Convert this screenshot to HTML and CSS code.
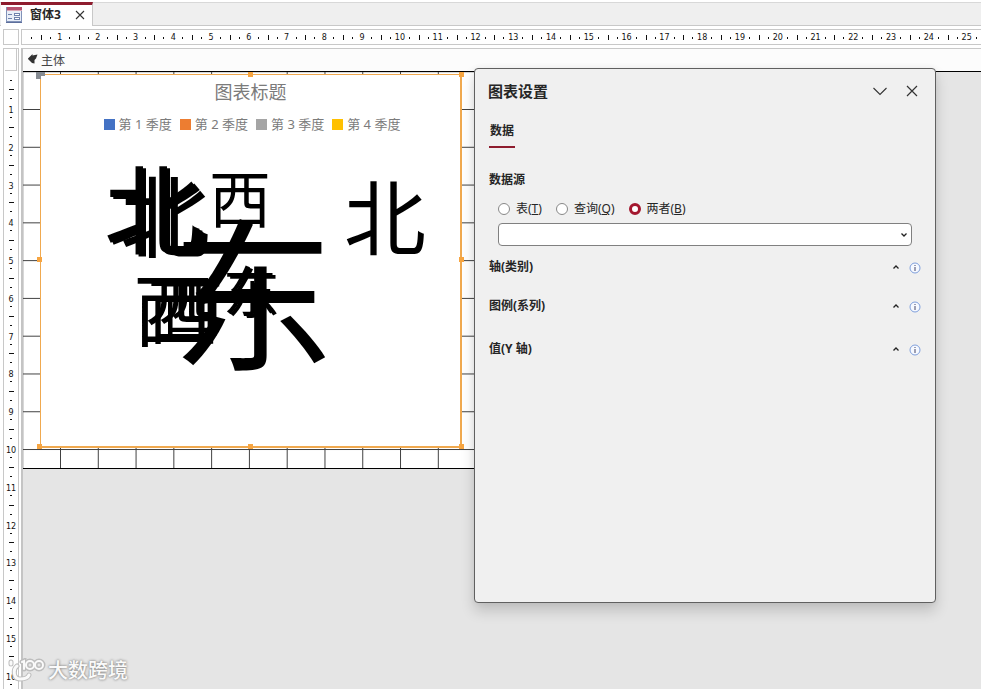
FILE: index.html
```
<!DOCTYPE html>
<html lang="zh-CN">
<head>
<meta charset="utf-8">
<title>窗体3</title>
<link rel="stylesheet" href="styles.css">
</head>
<body>
<div class="tabbar">
  <div class="tab">
    <svg class="tab-icon" width="16" height="16" viewBox="0 0 16 16" aria-hidden="true">
      <rect x="0.5" y="0.5" width="15" height="14" fill="#e8eef8" stroke="#8192b8"/>
      <rect x="1" y="0" width="15" height="4" fill="#b75370"/>
      <rect x="1" y="3" width="15" height="1" fill="#d9a5b4"/>
      <path d="M2 7.5h4M2 11.5h4" stroke="#6f82ad"/>
      <rect x="8.5" y="6.5" width="5" height="2" fill="#fff" stroke="#6f82ad"/>
      <rect x="8.5" y="10.5" width="5" height="2" fill="#fff" stroke="#6f82ad"/>
      <path d="M0 15.5h16" stroke="#5d6f9c"/>
    </svg>
    <span class="tab-name">窗体3</span>
    <button class="icon-btn" type="button" aria-label="关闭窗体">
      <svg width="10" height="10" viewBox="0 0 10 10"><path d="M1 1l8 8M9 1l-8 8" stroke="#333" stroke-width="1.1"/></svg>
    </button>
  </div>
</div>
<div class="ruler-row">
  <div class="corner"></div>
  <div class="ruler-h">
    <i></i><span>1</span><span>2</span><span>3</span><span>4</span><span>5</span><span>6</span><span>7</span><span>8</span><span>9</span><span>10</span><span>11</span><span>12</span><span>13</span><span>14</span><span>15</span><span>16</span><span>17</span><span>18</span><span>19</span><span>20</span><span>21</span><span>22</span><span>23</span><span>24</span><span>25</span>
  </div>
</div>
<main class="design">
  <div class="ruler-v">
    <div class="selector"></div>
    <i></i><span>1</span><span>2</span><span>3</span><span>4</span><span>5</span><span>6</span><span>7</span><span>8</span><span>9</span><span>10</span><span>11</span><span>12</span><span>13</span><span>14</span><span>15</span><span>16</span>
  </div>
  <div class="canvas">
    <div class="section-head">
      <svg width="10" height="10" viewBox="0 0 10 10" aria-hidden="true"><path d="M0 4.500L4.500 0V1.500L9.500 0.500L8 4.500L6.500 6V9.500L4 9L0 5z" fill="#333"/></svg>
      <span>主体</span>
    </div>
    <div class="section-body">
      <div class="chart">
        <b class="mover"></b>
        <b class="grip tm"></b><b class="grip tr"></b><b class="grip ml"></b><b class="grip mr"></b><b class="grip bl"></b><b class="grip bm"></b><b class="grip br"></b>
        <h2>图表标题</h2>
        <ul class="legend">
          <li class="q1">第 1 季度</li><li class="q2">第 2 季度</li><li class="q3">第 3 季度</li><li class="q4">第 4 季度</li>
        </ul>
        <svg class="plot" width="350" height="230" viewBox="90 150 350 230">
          <text class="g98" x="104" y="247">北</text>
          <text class="g98" x="107" y="249">北</text>
          <text class="g90" x="120" y="251">北</text>
          <text class="g82" x="344" y="249">北</text>
          <text class="g62" x="209" y="223">西</text>
          <text class="g80" x="133" y="340">西</text>
          <text class="g74" x="147" y="338">西</text>
          <text class="g62" x="161" y="331">西</text>
          <text class="g54" x="226" y="314">东</text>
          <text class="g54" x="223" y="312">东</text>
          <text class="g164" x="171" y="358">东</text>
        </svg>
      </div>
    </div>
  </div>
</main>
<section class="panel" aria-label="图表设置">
  <header>
    <h1>图表设置</h1>
    <button class="icon-btn" type="button" aria-label="折叠"><svg width="14" height="14" viewBox="0 0 14 14"><path d="M0.5 4L7 10.5L13.5 4" fill="none" stroke="#333" stroke-width="1.1"/></svg></button>
    <button class="icon-btn" type="button" aria-label="关闭"><svg width="12" height="12" viewBox="0 0 12 12"><path d="M1 1l10 10M11 1l-10 10" stroke="#333" stroke-width="1.2"/></svg></button>
  </header>
  <button class="data-tab" type="button">数据</button>
  <h3 id="source-label">数据源</h3>
  <div class="radios" role="radiogroup" aria-labelledby="source-label">
    <label><input type="radio" name="src">表(<u>T</u>)</label>
    <label><input type="radio" name="src">查询(<u>Q</u>)</label>
    <label><input type="radio" name="src" checked>两者(<u>B</u>)</label>
  </div>
  <div class="combo">
    <select aria-labelledby="source-label"><option></option></select>
    <svg width="6" height="4" viewBox="0 0 6 4" aria-hidden="true"><path d="M0.5 0.5L3 3L5.5 0.5" fill="none" stroke="#222" stroke-width="1.3"/></svg>
  </div>
  <div class="groups">
    <div class="group"><h3>轴(类别)</h3>
      <button class="icon-btn" type="button" aria-label="折叠轴"><svg width="6" height="4" viewBox="0 0 6 4"><path d="M0.5 3.5L3 1L5.5 3.5" fill="none" stroke="#222" stroke-width="1.3"/></svg></button>
      <button class="icon-btn" type="button" aria-label="轴信息"><svg width="12" height="12" viewBox="0 0 12 12"><circle cx="6" cy="6" r="5" fill="#f6f9ff" stroke="#7f9fdc"/><path d="M6 3v1M6 5v4" stroke="#446"/></svg></button>
    </div>
    <div class="group"><h3>图例(系列)</h3>
      <button class="icon-btn" type="button" aria-label="折叠图例"><svg width="6" height="4" viewBox="0 0 6 4"><path d="M0.5 3.5L3 1L5.5 3.5" fill="none" stroke="#222" stroke-width="1.3"/></svg></button>
      <button class="icon-btn" type="button" aria-label="图例信息"><svg width="12" height="12" viewBox="0 0 12 12"><circle cx="6" cy="6" r="5" fill="#f6f9ff" stroke="#7f9fdc"/><path d="M6 3v1M6 5v4" stroke="#446"/></svg></button>
    </div>
    <div class="group last"><h3>值(Y 轴)</h3>
      <button class="icon-btn" type="button" aria-label="折叠值"><svg width="6" height="4" viewBox="0 0 6 4"><path d="M0.5 3.5L3 1L5.5 3.5" fill="none" stroke="#222" stroke-width="1.3"/></svg></button>
      <button class="icon-btn" type="button" aria-label="值信息"><svg width="12" height="12" viewBox="0 0 12 12"><circle cx="6" cy="6" r="5" fill="#f6f9ff" stroke="#7f9fdc"/><path d="M6 3v1M6 5v4" stroke="#446"/></svg></button>
    </div>
  </div>
</section>
<div class="watermark">
  <svg width="38" height="26" viewBox="0 0 38 26" aria-hidden="true">
    <g fill="none" stroke-linecap="round">
      <g stroke="#bdbdbd" stroke-width="5"><path d="M3 4v2M9 8C5 11 5 21 12 21c5 0 8-1 9-4"/><path d="M14 4l2-1v8"/><ellipse cx="22" cy="7" rx="4" ry="4"/><ellipse cx="31" cy="7" rx="4" ry="4"/></g>
      <g stroke="#fafafa" stroke-width="2"><path stroke-width="3" d="M3 4v2M9 8C5 11 5 21 12 21c5 0 8-1 9-4"/><path d="M14 4l2-1v8"/><ellipse cx="22" cy="7" rx="4" ry="4"/><ellipse cx="31" cy="7" rx="4" ry="4"/></g>
    </g>
  </svg>
  <span>大数跨境</span>
</div>
</body>
</html>
```
FILE: styles.css
```
* { box-sizing: border-box; }
body {
  margin: 0;
  height: 100vh;
  display: flex;
  flex-direction: column;
  overflow: hidden;
  position: relative;
  background: #fff;
  color: #262626;
  font: 12px/16px "Noto Sans", "Noto Sans CJK SC", sans-serif;
}
h1, h2, h3, ul { margin: 0; padding: 0; }
svg { display: block; flex: none; }
button { font: inherit; color: inherit; }
.icon-btn {
  display: grid;
  place-items: center;
  padding: 0;
  border: 0;
  background: none;
}

/* document tabs */
.tabbar {
  flex: none;
  display: flex;
  height: 24px;
  margin-top: 2px;
  background: #efefef;
  box-shadow: inset 0 -1px #c8c8c8, inset 0 1px #d8d8d8;
}
.tab {
  display: flex;
  align-items: center;
  gap: 8px;
  padding: 0 7px 2px 5px;
  margin-left: 1px;
  background: #fff;
  border-top: 3px solid #8e1c2e;
  border-right: 1px solid #c8c8c8;
}
.tab-name { font-weight: 700; margin-right: 6px; }

/* rulers: one cell per centimetre */
.ruler-row {
  flex: none;
  display: flex;
  gap: 2px;
  margin: 3px 0 3px 3px;
  height: 16px;
}
.corner { width: 16px; border: 1px solid #c8c8c8; }
.ruler-h {
  flex: 1;
  min-width: 0;
  display: flex;
  overflow: hidden;
  border: solid #c8c8c8;
  border-width: 1px 0 1px 1px;
}
.ruler-h, .ruler-v { font: 8px/16px "DejaVu Sans", sans-serif; color: #111; }
.ruler-h span, .ruler-h i { flex: none; height: 14px; background-repeat: no-repeat; }
.ruler-h span {
  width: 1cm;
  text-align: center;
  background-image: linear-gradient(#111, #111), linear-gradient(#111, #111), linear-gradient(#111, #111);
  background-size: 1px 5px, 1px 2px, 1px 2px;
  background-position: 0 5px, 9px 7px, 28px 7px;
}
.ruler-h i {
  width: 19px;
  background-image: linear-gradient(#111, #111);
  background-size: 1px 2px;
  background-position: 9px 7px;
}
.design { flex: 1; min-height: 0; display: flex; gap: 2px; padding-left: 3px; }
.ruler-v {
  width: 16px;
  display: flex;
  flex-direction: column;
  overflow: hidden;
  border: solid #c8c8c8;
  border-width: 1px 1px 0;
}
.selector { flex: none; height: 22px; margin: 0 1px; border: solid #c8c8c8; border-width: 0 1px 1px 0; }
.ruler-v span, .ruler-v i { flex: none; background-repeat: no-repeat; }
.ruler-v span {
  height: 1cm;
  padding-top: 3px;
  line-height: 1cm;
  text-align: center;
  background-image: linear-gradient(#111, #111), linear-gradient(#111, #111), linear-gradient(#111, #111);
  background-size: 5px 1px, 2px 1px, 2px 1px;
  background-position: 5px 0, 6px 9px, 6px 28px;
}
.ruler-v i {
  height: 18px;
  background-image: linear-gradient(#111, #111);
  background-size: 2px 1px;
  background-position: 6px 9px;
}

/* form canvas */
.canvas {
  flex: 1;
  min-width: 0;
  position: relative;
  background: #e5e5e5;
  border-left: 2px solid #c4c4c4;
}
.section-head {
  display: flex;
  align-items: center;
  gap: 3px;
  height: 23px;
  padding: 2px 0 0 5px;
  border-top: 1px solid #c8c8c8;
  background: #fcfcfc;
  color: #444;
}
.section-head svg { margin-bottom: 4px; }
.section-head::after {
  content: "";
  position: absolute;
  top: 23px;
  left: 0;
  right: 0;
  height: 1px;
  background: #000;
}
.section-body {
  position: relative;
  width: 480px;
  height: 398px;
  background:
    linear-gradient(90deg, #404040 1px, transparent 1px) 37px 0 / 1cm 1cm,
    linear-gradient(#404040 1px, transparent 1px) 0 37px / 1cm 1cm,
    #fff;
  border: solid #000;
  border-width: 1px 0;
}
.chart {
  position: absolute;
  left: 17px;
  top: 2px;
  width: 422px;
  height: 374px;
  padding-top: 7px;
  background: #fff;
  border: solid #f0a94f;
  border-width: 1px 2px 2px 1px;
  color: #7b7b7b;
  text-align: center;
}
.grip { position: absolute; width: 5px; height: 5px; background: #f7a541; }
.mover {
  position: absolute;
  left: -5px;
  top: -3px;
  width: 9px;
  height: 7px;
  border: solid #868b92;
  border-width: 4px 0 0 5px;
}
.tm { left: 207px; top: -3px; }
.tr { right: -4px; top: -3px; }
.ml { left: -4px; top: 182px; }
.mr { right: -4px; top: 182px; }
.bl { left: -4px; bottom: -3px; }
.bm { left: 207px; bottom: -3px; }
.br { right: -4px; bottom: -3px; }
.chart h2 { font-size: 18px; line-height: 20px; font-weight: 400; }
.legend {
  display: flex;
  justify-content: center;
  gap: 8px;
  margin-top: 12px;
  padding-left: 3px;
  list-style: none;
  font-size: 13px;
  line-height: 20px;
}
.legend li { display: flex; align-items: center; gap: 4px; white-space: pre; }
.legend li::before { content: ""; width: 11px; height: 11px; background: currentColor; }
.q1::before { color: #4472c4; }
.q2::before { color: #ed7d31; }
.q3::before { color: #a5a5a5; }
.q4::before { color: #ffc000; }
.plot { margin: 16px 0 0 49px; font-family: "Noto Sans CJK SC", sans-serif; fill: #000; overflow: visible; }
.g54 { font-size: 54px; }
.g62 { font-size: 62px; }
.g74 { font-size: 74px; }
.g80 { font-size: 80px; }
.g82 { font-size: 82px; }
.g90 { font-size: 90px; }
.g98 { font-size: 98px; }
.g164 { font-size: 164px; }

/* floating settings pane */
.panel {
  position: absolute;
  left: 474px;
  right: 45px;
  top: 68px;
  bottom: 86px;
  padding: 12px 14px 0;
  background: #f0f0f0;
  border: 1px solid #606060;
  border-radius: 4px;
  box-shadow: 0 8px 14px rgba(0, 0, 0, .16), 0 0 6px rgba(0, 0, 0, .06);
}
.panel header { display: flex; align-items: center; gap: 19px; padding-right: 3px; }
.panel h1 { flex: 1; margin-left: -1px; font-size: 15px; line-height: 20px; }
.panel h3 { font-size: 12px; line-height: 16px; }
.data-tab {
  display: block;
  width: 26px;
  height: 26px;
  margin-top: 21px;
  padding: 0 0 6px;
  border: 0;
  border-bottom: 2px solid #8e1c2e;
  background: none;
  font-weight: 700;
  white-space: nowrap;
}
#source-label { margin-top: 24px; }
.radios { display: flex; gap: 14px; margin: 13px 0 0 9px; }
.radios label { display: flex; align-items: center; }
.radios input {
  appearance: none;
  width: 12px;
  height: 12px;
  margin: 0 6px 0 0;
  border: 1px solid #888;
  border-radius: 50%;
  background: #fff;
}
.radios input:checked { border: 3px solid #a4182f; }
.combo { position: relative; margin: 6px 9px 0; }
.combo select {
  appearance: none;
  display: block;
  width: 100%;
  height: 23px;
  border: 1px solid #808080;
  border-radius: 4px;
  background: #fff;
}
.combo svg { position: absolute; right: 5px; top: 10px; pointer-events: none; }
.groups { display: grid; gap: 23px; margin-top: 13px; }
.group { display: flex; align-items: center; gap: 10px; }
.group h3 { flex: 1; }
.group .icon-btn:last-child { padding-top: 2px; }
.last { margin-top: 4px; }

.watermark {
  position: absolute;
  left: 8px;
  bottom: 4px;
  display: flex;
  align-items: center;
  gap: 2px;
  color: #fafafa;
  font-size: 20px;
  font-weight: 500;
  line-height: 28px;
  text-shadow: 0 0 3px #888, 0 0 2px #999;
}
```
